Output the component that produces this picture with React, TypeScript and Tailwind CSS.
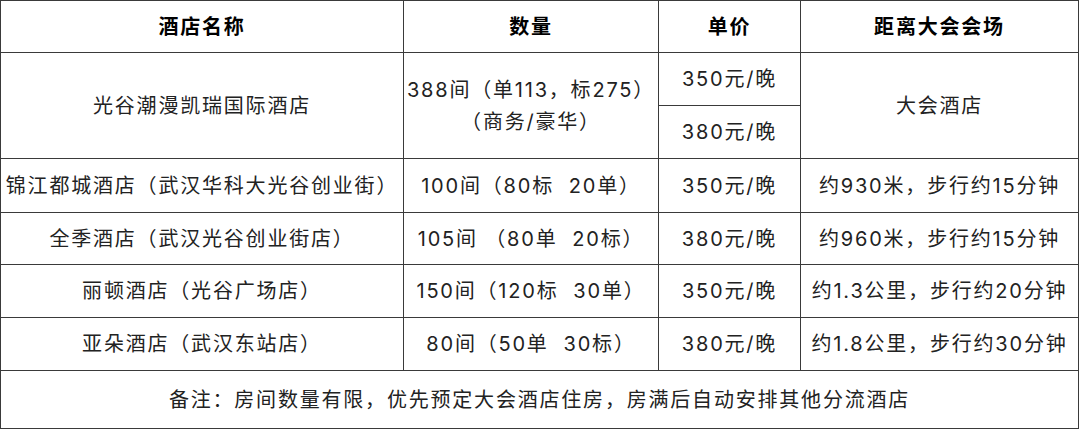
import React from 'react';

const rows = [
  { name: '锦江都城酒店（武汉华科大光谷创业街）', qty: '100间（80标  20单）', price: '350元/晚', dist: '约930米，步行约15分钟', h: 'h-[54px]' },
  { name: '全季酒店（武汉光谷创业街店）', qty: '105间 （80单  20标）', price: '380元/晚', dist: '约960米，步行约15分钟', h: 'h-[52px]' },
  { name: '丽顿酒店（光谷广场店）', qty: '150间（120标  30单）', price: '350元/晚', dist: '约1.3公里，步行约20分钟', h: 'h-[53px]' },
  { name: '亚朵酒店（武汉东站店）', qty: '80间（50单  30标）', price: '380元/晚', dist: '约1.8公里，步行约30分钟', h: 'h-[53px]' },
];

const cell = 'flex items-center justify-center text-center border-r border-b border-[#3a3a3a] whitespace-pre';

const App: React.FC = () => {
  return (
    <div
      className="w-[1080px] h-[429px] bg-white text-[#222] text-[20px] tracking-[1.8px] leading-[32px]"
      style={{ fontFamily: 'Inter, "Noto Sans CJK SC", sans-serif' }}
    >
      <div className="w-[1079px] border-l border-t border-[#3a3a3a] grid grid-cols-[403px_255px_142px_1fr]">
        {/* Header */}
        <div className={`${cell} h-[52px] font-bold text-black`}>酒店名称</div>
        <div className={`${cell} h-[52px] font-bold text-black`}>数量</div>
        <div className={`${cell} h-[52px] font-bold text-black`}>单价</div>
        <div className={`${cell} h-[52px] font-bold text-black`}>距离大会会场</div>

        {/* Main hotel */}
        <div className={`${cell} h-[106px]`}>光谷潮漫凯瑞国际酒店</div>
        <div className={`${cell} h-[106px] flex-col`}>
          <span>388间（单113，标275）</span>
          <span>（商务/豪华）</span>
        </div>
        <div className="flex flex-col border-r border-b border-[#3a3a3a] h-[106px]">
          <div className="h-[53px] flex items-center justify-center border-b border-[#3a3a3a]">350元/晚</div>
          <div className="flex-1 flex items-center justify-center">380元/晚</div>
        </div>
        <div className={`${cell} h-[106px]`}>大会酒店</div>

        {rows.map((r) => (
          <React.Fragment key={r.name}>
            <div className={`${cell} ${r.h}`}>{r.name}</div>
            <div className={`${cell} ${r.h}`}>{r.qty}</div>
            <div className={`${cell} ${r.h}`}>{r.price}</div>
            <div className={`${cell} ${r.h}`}>{r.dist}</div>
          </React.Fragment>
        ))}

        <div className={`${cell} h-[58px] col-span-4`}>
          备注：房间数量有限，优先预定大会酒店住房，房满后自动安排其他分流酒店
        </div>
      </div>
    </div>
  );
};

export default App;
